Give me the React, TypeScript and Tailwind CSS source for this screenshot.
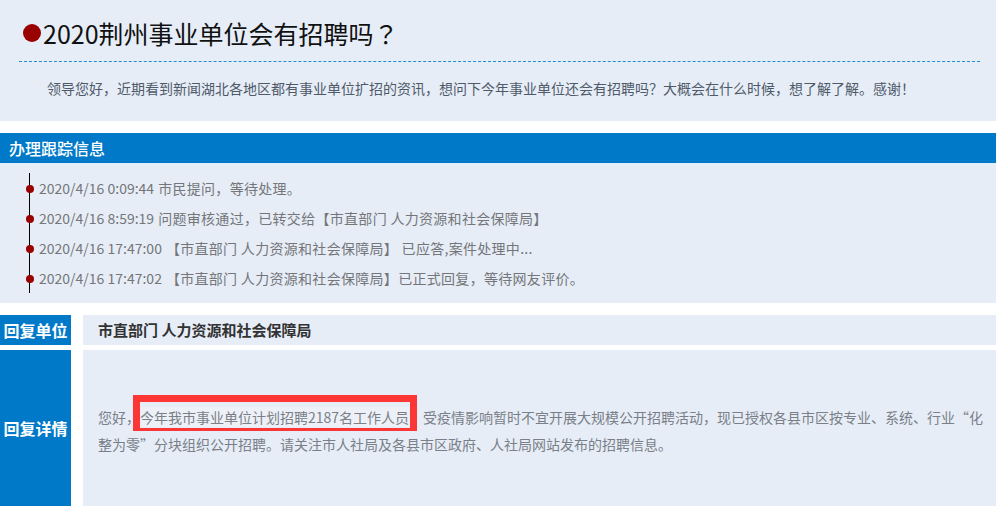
import React from 'react';

const track = [
  { time: '2020/4/16 0:09:44', text: '市民提问，等待处理。' },
  { time: '2020/4/16 8:59:19', text: '问题审核通过，已转交给【市直部门 人力资源和社会保障局】' },
  { time: '2020/4/16 17:47:00', text: '【市直部门 人力资源和社会保障局】 已应答,案件处理中...' },
  { time: '2020/4/16 17:47:02', text: '【市直部门 人力资源和社会保障局】已正式回复，等待网友评价。' },
];

const App: React.FC = () => {
  return (
    <div className="w-[996px] h-[506px] overflow-hidden bg-white font-['Noto_Sans_CJK_SC','Noto_Sans',sans-serif]">
      {/* Question */}
      <div className="h-[121px] bg-[#e6edf7] pt-[15px]">
        <div className="flex items-center pl-[23px] h-[36px]">
          <span className="w-[18px] h-[18px] rounded-full bg-[#990000] mr-[2px]"></span>
          <h1 className="text-[25px] leading-[36px] text-[#111]">
            2020荆州事业单位会有招聘吗<span className="font-['Noto_Sans_CJK_TC',sans-serif]">？</span>
          </h1>
        </div>
        <div className="ml-[19px] mr-[16px] mt-[10px] border-t border-dashed border-[#1e8fd6]"></div>
        <p className="pl-[47px] mt-[14px] text-[14px] leading-[24px] text-[#4f5a69]">
          领导您好，近期看到新闻湖北各地区都有事业单位扩招的资讯，想问下今年事业单位还会有招聘吗？大概会在什么时候，想了解了解。感谢！
        </p>
      </div>

      {/* Tracking */}
      <div className="mt-[12px] h-[30px] bg-[#0079c8] pl-[9px] text-[16px] leading-[30px] font-medium text-white">
        办理跟踪信息
      </div>
      <div className="h-[140px] bg-[#e6edf7] py-[10px]">
        <ul className="ml-[29px] border-l border-black">
          {track.map((item, i) => (
            <li key={i} className="relative h-[30px] flex items-center pl-[9px] text-[14px] text-[#747679] whitespace-nowrap">
              <span className="absolute left-[-4.5px] top-[11.5px] w-[8px] h-[8px] rounded-full bg-[#990000]"></span>
              <span>{item.time}</span>
              <span className="ml-[4px] tracking-[0.3px]">{item.text}</span>
            </li>
          ))}
        </ul>
      </div>

      {/* Reply unit */}
      <div className="mt-[12px] flex h-[30px]">
        <div className="w-[71px] bg-[#0079c8] text-white text-[16px] font-bold flex items-center justify-center">回复单位</div>
        <div className="ml-[12px] flex-1 bg-[#e6edf7] pl-[15px] flex items-center text-[15px] font-bold text-[#333]">
          市直部门 人力资源和社会保障局
        </div>
      </div>

      {/* Reply detail */}
      <div className="mt-[5px] flex h-[156px]">
        <div className="w-[71px] bg-[#0079c8] text-white text-[16px] font-bold flex items-center justify-center">回复详情</div>
        <div className="ml-[12px] flex-1 bg-[#e6edf7] pl-[15px] pt-[5px] flex items-center">
          <p className="text-[14px] leading-[27px] text-[#7a7f88] whitespace-nowrap">
            您好，
            <span className="relative bg-[#edf1f7]">
              今年我市事业单位计划招聘2187名工作人员
              <span className="pointer-events-none absolute left-[-7px] right-[-8px] top-[-12px] bottom-[-4px] border-[7px] border-b-[3px] border-[#fc3535]"></span>
            </span>
            ，受疫情影响暂时不宜开展大规模公开招聘活动，现已授权各县市区按专业、系统、行业“化
            <br />
            整为零”分块组织公开招聘。请关注市人社局及各县市区政府、人社局网站发布的招聘信息。
          </p>
        </div>
      </div>
    </div>
  );
};

export default App;
